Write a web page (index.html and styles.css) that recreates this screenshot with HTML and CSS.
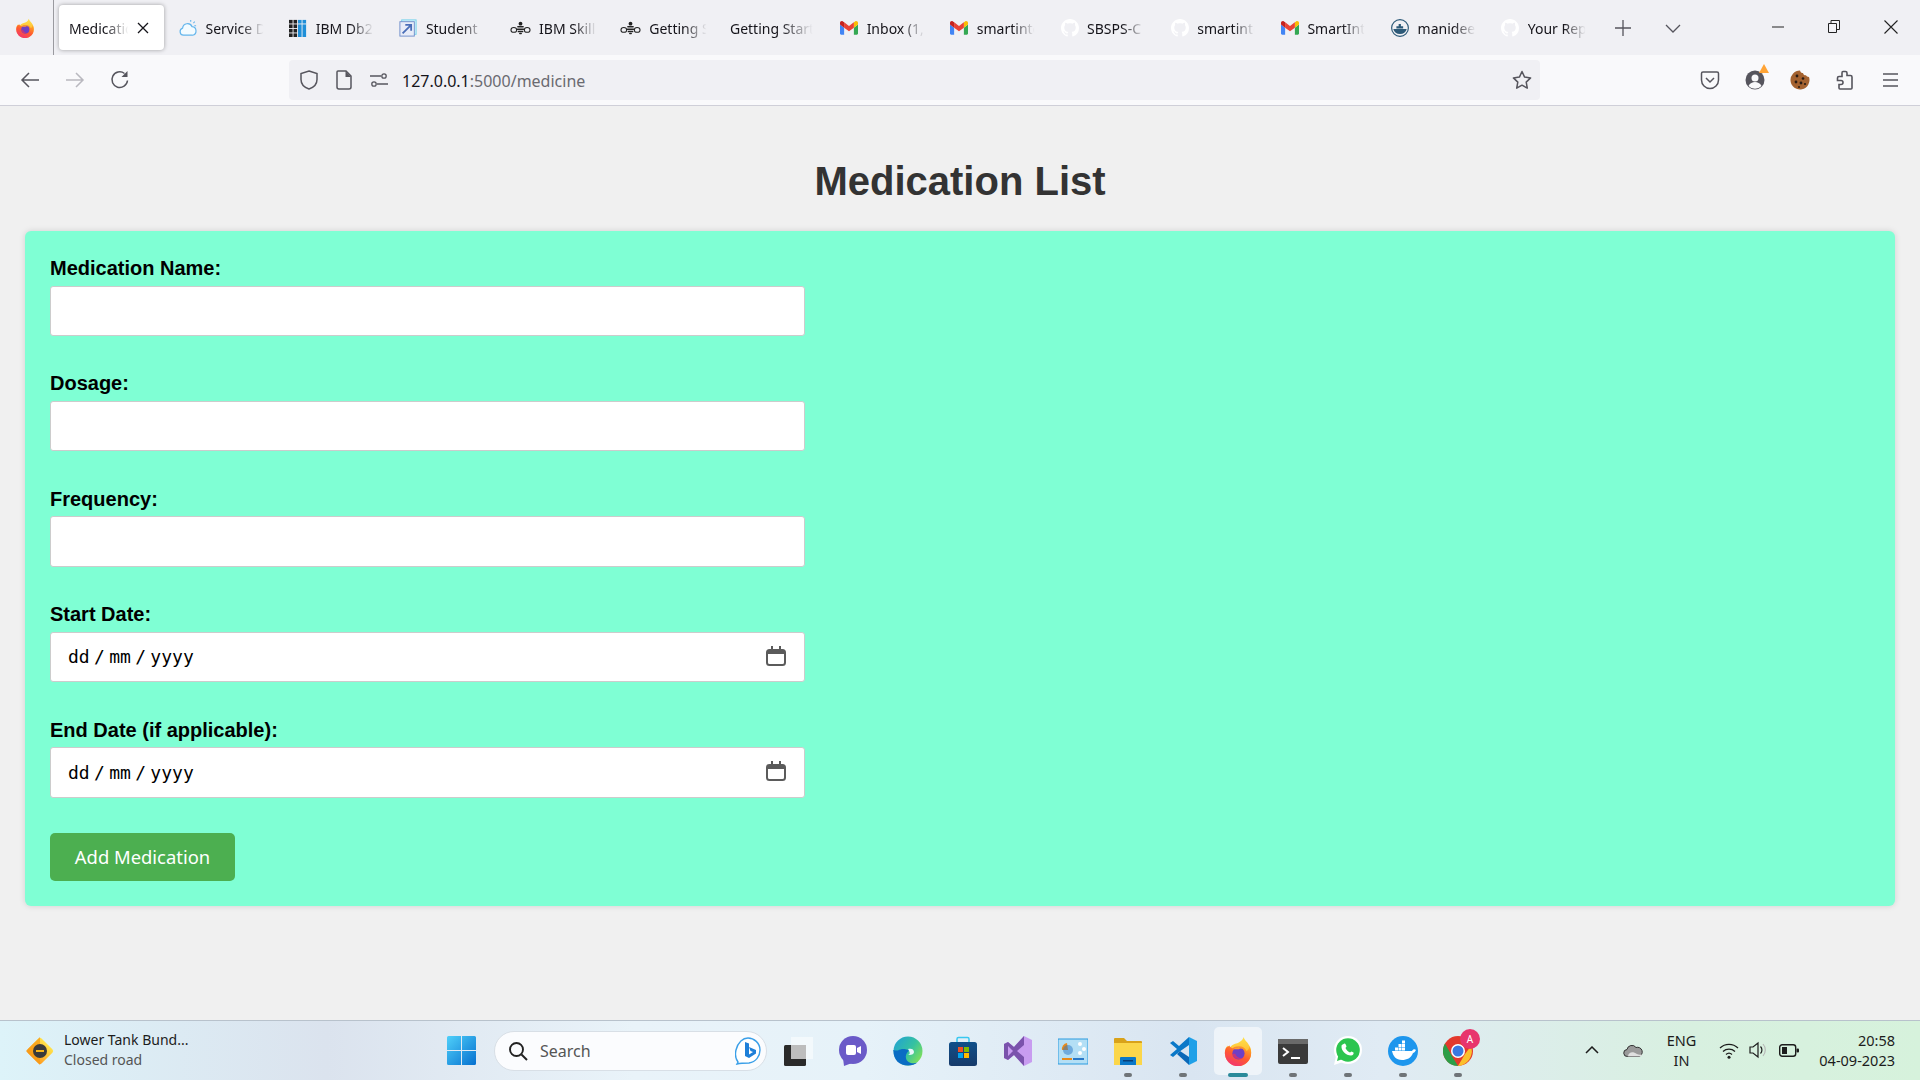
FILE: index.html
```html
<!DOCTYPE html>
<html lang="en">
<head>
<meta charset="utf-8">
<title>Medication List</title>
<link rel="stylesheet" href="styles.css">
</head>
<body>
<svg class="defs" width="0" height="0" aria-hidden="true">
  <defs>
    <linearGradient id="ffBody" x1="0.8" y1="0" x2="0.2" y2="1"><stop offset="0" stop-color="#ffb020"/><stop offset="0.5" stop-color="#ff5a30"/><stop offset="1" stop-color="#f0307a"/></linearGradient>
    <linearGradient id="ffFlame" x1="0.5" y1="0" x2="0.5" y2="1"><stop offset="0" stop-color="#ffe24a"/><stop offset="1" stop-color="#ff9a20"/></linearGradient>
    <linearGradient id="winLogo" x1="0" y1="0" x2="1" y2="1"><stop offset="0" stop-color="#4fd0fa"/><stop offset="1" stop-color="#0670cf"/></linearGradient>
    <linearGradient id="edgeA" x1="0" y1="0" x2="1" y2="0.7"><stop offset="0" stop-color="#1f9fd8"/><stop offset="0.6" stop-color="#35c2a0"/><stop offset="1" stop-color="#7fe05a"/></linearGradient>
    <linearGradient id="storeBg" x1="0" y1="0" x2="0" y2="1"><stop offset="0" stop-color="#10508a"/><stop offset="1" stop-color="#173a6a"/></linearGradient>
    <symbol id="firefox" viewBox="0 0 32 32">
      <path d="M22 1c1 4 4 5 6 9 2 3 2 6 2 8a14 14 0 1 1-28 0c0-3 1-6 3-8 0 2 1 3 2 4 1-4 4-5 7-6 3-1 7-3 8-7z" fill="url(#ffFlame)"/>
      <path d="M3 13a14 14 0 1 0 27 5c0-3-1-5-2-7 0 3-1 4-3 5-1-3-4-5-8-5-3 0-5 1-7 2-2-1-3-2-3-3-2 1-3 2-4 3z" fill="url(#ffBody)"/>
      <circle cx="16.5" cy="18.500" r="6.500" fill="#6f3fc4"/>
      <path d="M11 14c3-3 8-3 11 0-2-1-4-1-5 0-2 0-4 0-6 0z" fill="#ff9a30"/>
      <path d="M10 19c1 5 6 7 11 5-4 0-7-2-8-5z" fill="#e8305f" opacity=".7"/>
    </symbol>
    <symbol id="gmail" viewBox="0 0 24 18">
      <path d="M1.600 18H5.500V8.500L0 4.400v12C0 17.300.7 18 1.600 18z" fill="#4285f4"/>
      <path d="M18.500 18h3.900c.9 0 1.600-.7 1.600-1.600v-12l-5.500 4.100z" fill="#34a853"/>
      <path d="M18.500 1.400v7.100L24 4.400V2.200c0-2-2.300-3.100-3.900-1.900z" fill="#fbbc04"/>
      <path d="M5.500 8.500V1.400L12 6.300l6.500-4.900v7.100L12 13.400z" fill="#ea4335"/>
      <path d="M0 2.200v2.200l5.500 4.100V1.400L3.900.3C2.300-.9 0 .2 0 2.200z" fill="#c5221f"/>
    </symbol>
    <symbol id="github" viewBox="0 0 16 16">
      <path fill="#fff" d="M8 0C3.580 0 0 3.580 0 8c0 3.540 2.290 6.530 5.470 7.590.4.070.55-.17.55-.38 0-.19-.01-.82-.01-1.490-2.010.37-2.530-.49-2.690-.94-.09-.23-.48-.94-.82-1.130-.28-.15-.68-.52-.01-.53.63-.01 1.080.58 1.230.82.720 1.210 1.870.87 2.330.66.070-.52.28-.87.51-1.070-1.780-.2-3.640-.89-3.640-3.950 0-.87.31-1.590.82-2.150-.08-.2-.36-1.020.08-2.120 0 0 .67-.21 2.200.82.64-.18 1.320-.27 2-.27.68 0 1.360.09 2 .27 1.530-1.040 2.200-.82 2.200-.82.44 1.100.16 1.920.08 2.120.51.56.82 1.270.82 2.150 0 3.070-1.870 3.750-3.650 3.950.29.25.54.73.54 1.480 0 1.070-.01 1.930-.01 2.200 0 .21.15.46.55.38A8.013 8.013 0 0 0 16 8c0-4.420-3.580-8-8-8z"/>
    </symbol>
    <symbol id="bee" viewBox="0 0 22 14">
      <g fill="none" stroke="#222" stroke-width="1.100"><ellipse cx="4" cy="9" rx="3" ry="2.500"/><ellipse cx="18" cy="9" rx="3" ry="2.500"/></g>
      <g fill="#222"><circle cx="11" cy="2.500" r="2"/><rect x="7.500" y="5" width="7" height="1.500" rx=".7"/><rect x="7" y="7.500" width="8" height="1.500" rx=".7"/><rect x="8" y="10" width="6" height="1.500" rx=".7"/><rect x="9.500" y="12" width="3" height="1.500" rx=".7"/></g>
    </symbol>
    <symbol id="calendar" viewBox="0 0 20 20">
      <path d="M5 0h2v3h6V0h2v3h1.500A3.500 3.500 0 0 1 20 6.500v10a3.500 3.500 0 0 1-3.500 3.500h-13A3.500 3.500 0 0 1 0 16.500v-10A3.500 3.500 0 0 1 3.500 3H5z M2 8v8.500A1.500 1.500 0 0 0 3.500 18h13a1.500 1.500 0 0 0 1.500-1.500V8z" fill="#5b5b5b" fill-rule="evenodd"/>
    </symbol>
  </defs>
</svg>

<header class="tabbar">
  <div class="ff-slot"><svg class="i20"><use href="#firefox"/></svg></div>
  <div class="tab-sep"></div>
  <div class="tab active"><span class="tab-label">Medicatio</span><svg class="tab-close" viewBox="0 0 12 12"><path d="M1 1l10 10M11 1L1 11" stroke="#15141a" stroke-width="1.300" fill="none"/></svg></div>
  <div class="tabs">
    <div class="tab"><svg class="tab-icon" viewBox="0 0 20 20"><path d="M5 18a4 4 0 0 1-1-7.800A5.500 5.500 0 0 1 14.500 8.500 4.800 4.800 0 0 1 15 18z" fill="#f3fbff" stroke="#63b5ec" stroke-width="1.300"/><path d="M13 1v2M17.500 3l-1.500 1.500M19 7.500h-2" stroke="#63b5ec" stroke-width="1.200"/></svg><span class="tab-label">Service D</span></div>
    <div class="tab"><svg class="tab-icon" viewBox="0 0 20 20"><g fill="#222"><rect x="0" y="1" width="4" height="4"/><rect x="5" y="1" width="4" height="4"/><rect x="0" y="6" width="4" height="4"/><rect x="5" y="6" width="4" height="4"/><rect x="0" y="11" width="4" height="4"/><rect x="5" y="11" width="4" height="4"/><rect x="0" y="16" width="4" height="4"/><rect x="5" y="16" width="4" height="4"/></g><g fill="#1f8fd8"><rect x="10" y="1" width="4" height="19"/><rect x="15" y="1" width="4" height="19"/></g><rect x="10" y="5" width="9" height="1" fill="#f0f0f4"/></svg><span class="tab-label">IBM Db2</span></div>
    <div class="tab"><svg class="tab-icon" viewBox="0 0 20 20"><rect x="3" y="1" width="16" height="16" fill="#d8f2fb" stroke="#6fd0ea"/><rect x="1" y="3" width="16" height="16" fill="#e8ecf8" stroke="#6a8ac8"/><path d="M4 16L13 7M7 6.500h6.500V13" stroke="#4a6eb8" stroke-width="2" fill="none"/></svg><span class="tab-label">Student</span></div>
    <div class="tab"><svg class="tab-icon bee"><use href="#bee"/></svg><span class="tab-label">IBM Skill</span></div>
    <div class="tab"><svg class="tab-icon bee"><use href="#bee"/></svg><span class="tab-label">Getting S</span></div>
    <div class="tab"><span class="tab-label wide">Getting Start</span></div>
    <div class="tab"><svg class="tab-icon gm"><use href="#gmail"/></svg><span class="tab-label">Inbox (1,</span></div>
    <div class="tab"><svg class="tab-icon gm"><use href="#gmail"/></svg><span class="tab-label">smartinte</span></div>
    <div class="tab"><svg class="tab-icon"><use href="#github"/></svg><span class="tab-label">SBSPS-C</span></div>
    <div class="tab"><svg class="tab-icon"><use href="#github"/></svg><span class="tab-label">smartinte</span></div>
    <div class="tab"><svg class="tab-icon gm"><use href="#gmail"/></svg><span class="tab-label">SmartInt</span></div>
    <div class="tab"><svg class="tab-icon" viewBox="0 0 20 20"><circle cx="10" cy="10" r="9.300" fill="#f0f0f4" stroke="#2d5a78" stroke-width="1.300"/><path d="M2.500 11h15a7.800 7.800 0 0 1-15 0z" fill="#2d5a78"/><path d="M6 10.500V8h2.500V5.500H11V8h2.500v2.500z" fill="#2d5a78"/></svg><span class="tab-label">manidee</span></div>
    <div class="tab"><svg class="tab-icon"><use href="#github"/></svg><span class="tab-label">Your Rep</span></div>
    <div class="tab-new"><svg width="16" height="16" viewBox="0 0 16 16"><path d="M8 0v16M0 8h16" stroke="#55545c" stroke-width="1.300"/></svg></div>
    <div class="tab-list"><svg width="16" height="9" viewBox="0 0 16 9"><path d="M1 1l7 7 7-7" stroke="#55545c" stroke-width="1.300" fill="none"/></svg></div>
  </div>
  <div class="win-controls">
    <svg width="12" height="2" viewBox="0 0 12 2"><path d="M0 1h12" stroke="#222" stroke-width="1"/></svg>
    <svg width="12" height="14" viewBox="0 0 12 14"><path d="M.5 3.500h8v9h-8z M3 3.500V.5h8.500v9H8.500" fill="none" stroke="#222"/></svg>
    <svg width="14" height="14" viewBox="0 0 14 14"><path d="M.5.500l13 13M13.500.500l-13 13" stroke="#222" stroke-width="1.100"/></svg>
  </div>
</header>

<nav class="navbar">
  <div class="nav-buttons">
    <svg class="i20" viewBox="0 0 20 20"><path d="M19 10H2M9 3l-7 7 7 7" fill="none" stroke="#56555d" stroke-width="1.500"/></svg>
    <svg class="i20" viewBox="0 0 20 20"><path d="M1 10h17M11 3l7 7-7 7" fill="none" stroke="#b9b8bf" stroke-width="1.500"/></svg>
    <svg class="i20" viewBox="0 0 20 20"><path d="M17.500 10.500A7.800 7.800 0 1 1 14.500 3.500" fill="none" stroke="#56555d" stroke-width="1.500"/><path d="M17.500 1v6h-6z" fill="#56555d"/></svg>
  </div>
  <div class="urlbar">
    <svg class="i20" viewBox="0 0 20 20"><path d="M10 1l8 2.500v6c0 5-3.500 8-8 9.500-4.500-1.500-8-4.500-8-9.500v-6z" fill="none" stroke="#56555d" stroke-width="1.500"/></svg>
    <svg class="i20" viewBox="0 0 20 20"><path d="M4 1h8l5 5v11a2 2 0 0 1-2 2H5a2 2 0 0 1-2-2V2a1 1 0 0 1 1-1z" fill="none" stroke="#56555d" stroke-width="1.500"/><path d="M11.500 1v6H17z" fill="#56555d"/></svg>
    <svg class="i20" viewBox="0 0 20 20"><circle cx="15" cy="6" r="2.200" fill="none" stroke="#56555d" stroke-width="1.300"/><circle cx="5" cy="14" r="2.200" fill="none" stroke="#56555d" stroke-width="1.300"/><path d="M1 6h11M8 14h11" stroke="#56555d" stroke-width="1.300"/></svg>
    <span class="url"><span class="url-host">127.0.0.1</span>:5000/medicine</span>
    <svg class="i20 url-star" viewBox="0 0 20 20"><path d="M10 1.500l2.600 5.600 6 .8-4.400 4.200 1.100 6L10 15.200 4.700 18.100l1.100-6L1.400 7.900l6-.8z" fill="none" stroke="#56555d" stroke-width="1.500" stroke-linejoin="round"/></svg>
  </div>
  <div class="nav-tools">
    <svg class="i20" viewBox="0 0 20 20"><path d="M3 2h14a1.500 1.500 0 0 1 1.500 1.500V10a8.500 8.500 0 0 1-17 0V3.500A1.500 1.500 0 0 1 3 2z" fill="none" stroke="#56555d" stroke-width="1.500"/><path d="M6 8l4 4 4-4" fill="none" stroke="#56555d" stroke-width="1.500"/></svg>
    <span class="account"><svg class="i20" viewBox="0 0 20 20"><circle cx="10" cy="10" r="9.500" fill="#56555d"/><circle cx="10" cy="8" r="3.500" fill="#f9f9fb"/><path d="M3.500 16c1.500-3 4-4 6.500-4s5 1 6.500 4a9 9 0 0 1-13 0z" fill="#f9f9fb"/></svg><svg class="badge-warn" viewBox="0 0 10 9"><path d="M5 0l5 9H0z" fill="#ffa436"/></svg></span>
    <svg class="i20" viewBox="0 0 20 20"><path d="M10 0.500c.5 2 1.500 2.500 3 2.500.3 1.500 1.500 2.500 3 2.300.6 1.200 1.500 1.700 3 1.700A9.500 9.500 0 1 1 10 .5z" fill="#a4622f"/><g fill="#2a1c14"><circle cx="7" cy="6" r="1.400"/><circle cx="13" cy="8.500" r="1.300"/><circle cx="6" cy="12" r="1.400"/><circle cx="11" cy="13" r="1.400"/><circle cx="15" cy="14" r="1.100"/><circle cx="9" cy="17" r="1"/></g></svg>
    <svg class="i20" viewBox="0 0 20 20"><path d="M8 1.500h2.500c1 0 1.500.5 1.500 1.500v2.500h3.500a1.500 1.500 0 0 1 1.500 1.500v11a1 1 0 0 1-1 1H5a1 1 0 0 1-1-1v-3.500h2a2 2 0 0 0 0-4H2.500V8A1.500 1.500 0 0 1 4 6.500h3V3c0-1 .2-1.500 1-1.500z" fill="none" stroke="#56555d" stroke-width="1.600"/></svg>
    <svg class="i20" viewBox="0 0 20 20"><path d="M3 4h15M3 10h15M3 16h15" stroke="#56555d" stroke-width="1.500"/></svg>
  </div>
</nav>

<main class="page">
  <h1 class="title">Medication List</h1>
  <form class="card">
    <div class="field"><label class="field-label">Medication Name:</label><div class="field-input"></div></div>
    <div class="field"><label class="field-label">Dosage:</label><div class="field-input"></div></div>
    <div class="field"><label class="field-label">Frequency:</label><div class="field-input"></div></div>
    <div class="field"><label class="field-label">Start Date:</label><div class="field-input date"><span>dd / mm / yyyy</span><svg class="cal"><use href="#calendar"/></svg></div></div>
    <div class="field"><label class="field-label">End Date (if applicable):</label><div class="field-input date"><span>dd / mm / yyyy</span><svg class="cal"><use href="#calendar"/></svg></div></div>
    <button class="submit" type="button">Add Medication</button>
  </form>
</main>

<footer class="taskbar">
  <div class="widget">
    <svg class="widget-icon" viewBox="0 0 30 30"><rect x="5" y="5" width="20" height="20" rx="2.500" transform="rotate(45 15 15)" fill="url(#ffFlame)"/><path d="M15 .9L.9 15 15 29.100z" fill="#f59a14" opacity=".7"/><circle cx="15" cy="15" r="7" fill="#3a3a3a"/><rect x="11" y="14" width="8" height="2" fill="#f7b51a"/></svg>
    <div class="widget-text"><div class="w-title">Lower Tank Bund...</div><div class="w-sub">Closed road</div></div>
  </div>
  <div class="start"><svg width="29" height="29" viewBox="0 0 29 29"><g fill="url(#winLogo)"><path d="M0 1.500A1.500 1.500 0 0 1 1.500 0H14v14H0zM15 0h12.500A1.500 1.500 0 0 1 29 1.500V14H15zM0 15h14v14H1.500A1.500 1.500 0 0 1 0 27.500zM15 15h14v12.500a1.500 1.500 0 0 1-1.500 1.500H15z"/></g></svg></div>
  <div class="search">
    <svg width="20" height="20" viewBox="0 0 20 20"><circle cx="8.500" cy="8.500" r="6.500" fill="none" stroke="#222" stroke-width="1.900"/><path d="M13.500 13.500L19 19" stroke="#222" stroke-width="2"/></svg>
    <span class="search-text">Search</span>
    <svg class="bing" width="26" height="30" viewBox="0 0 26 30"><path d="M3 26c-3-4-3-8-2-12C3 6 8 2 13 2c6 0 12 5 12 12 0 6-4 12-11 13-3 0-8 0-12 1z" fill="#fff" stroke="#3a9fe8" stroke-width="1.400"/><path d="M10 6l4 1.500v11l4-2.500-2.500-1-1.500-4 7 3v3.500l-7 4.500-4-2z" fill="#1e7fd8"/></svg>
  </div>
  <div class="apps">
    <div class="app"><svg class="app-icon" viewBox="0 0 30 30"><rect x="8" y="1" width="22" height="22" fill="#fff" opacity=".5"/><rect x="1" y="9" width="22" height="21" rx="1.500" fill="#2a2a2a"/><rect x="8" y="9" width="15" height="14" fill="#bdbdbd"/></svg></div>
    <div class="app"><svg class="app-icon" viewBox="0 0 30 30"><circle cx="15" cy="14" r="14" fill="#6a5ac8"/><path d="M5 22l1 8 8-3z" fill="#6a5ac8"/><rect x="8" y="9" width="10" height="10" rx="2" fill="#fff"/><path d="M19 12l4-2v8l-4-2z" fill="#fff"/></svg></div>
    <div class="app"><svg class="app-icon" viewBox="0 0 30 30"><circle cx="15" cy="15" r="14.500" fill="url(#edgeA)"/><path d="M.5 15c0 9 6 14.500 14.500 14.500 4 0 7-1 9.500-3-5 2-10.500 0-11.500-4-.8-3 .5-6 3-8-3.500-2-8-2-11 0-2 0-4 0-5-.5z" fill="#0a6cc4"/><path d="M15 13c3-1 6 0 6 3 0 2-2.500 3.500-6 3 1.500-.5 2-1.500 1.500-3-.3-1-1-2.500-1.500-3z" fill="#eaf5fb"/></svg></div>
    <div class="app"><svg class="app-icon" viewBox="0 0 30 30"><path d="M9 7V3a1.500 1.500 0 0 1 1.500-1.500h9A1.500 1.500 0 0 1 21 3v4" fill="none" stroke="#38c8f0" stroke-width="1.500"/><rect x="1" y="6" width="28" height="24" rx="2.500" fill="url(#storeBg)"/><rect x="10" y="11" width="5" height="5" fill="#f25022"/><rect x="16" y="11" width="5" height="5" fill="#7fba00"/><rect x="10" y="17" width="5" height="5" fill="#00a4ef"/><rect x="16" y="17" width="5" height="5" fill="#ffb900"/></svg></div>
    <div class="app"><svg class="app-icon" viewBox="0 0 30 30"><path d="M21 0l8 4v22l-8 4-10-11-6 5-4-2V8l4-2 6 5z" fill="#c89cf0"/><path d="M21 0v30L11 19l-6 5-4-2V8l4-2 6 5z" fill="#7a52ac"/><path d="M5 10v10l5-5zM21 9l-7 6 7 6z" fill="#c89cf0"/></svg></div>
    <div class="app"><svg class="app-icon" viewBox="0 0 30 30"><rect x="0" y="3" width="30" height="25" fill="#b4dff5" stroke="#2a9be0"/><path d="M9 7l1 7H4a6 6 0 0 1 5-7z" fill="#e88a1a"/><circle cx="10" cy="14" r="5" fill="#2a78c8" opacity=".5"/><g fill="#fff"><circle cx="22" cy="8" r="2"/><circle cx="26" cy="13" r="2"/><circle cx="22" cy="17" r="2"/></g><rect x="4" y="22" width="10" height="2" fill="#e88a1a"/><rect x="15" y="22" width="11" height="2" fill="#2a78c8"/></svg></div>
    <div class="app"><svg class="app-icon" viewBox="0 0 30 30"><path d="M1 3a1 1 0 0 1 1-1h9l3 3h14a1 1 0 0 1 1 1v3H1z" fill="#d9a21a"/><rect x="1" y="7" width="28" height="22" fill="#fbd64a"/><path d="M8 21h14a1 1 0 0 1 1 1v7H7v-7a1 1 0 0 1 1-1z" fill="#0a78c8"/><rect x="10" y="24" width="10" height="1.500" fill="#063e78"/></svg><span class="dot"></span></div>
    <div class="app"><svg class="app-icon" viewBox="0 0 30 30"><path d="M21 1l8 4v20l-8 4z" fill="#1fa0e8"/><path d="M21 1v8l-10 7-6 5-3-2 7-6-7-6 3-2 6 5z" fill="#0a78c8"/><path d="M21 21v8l-12-11 3-3z" fill="#0a68b8"/></svg><span class="dot"></span></div>
    <div class="app current"><svg class="app-icon" viewBox="0 0 30 30"><use href="#firefox"/></svg><span class="dot live"></span></div>
    <div class="app"><svg class="app-icon" viewBox="0 0 30 30"><rect x="0" y="3" width="30" height="25" rx="2" fill="#3a3a3a"/><rect x="0" y="3" width="30" height="5" fill="#6a6a6a"/><path d="M5 12l5 4-5 4" fill="none" stroke="#fff" stroke-width="2"/><path d="M13 22h9" stroke="#fff" stroke-width="2"/></svg><span class="dot"></span></div>
    <div class="app"><svg class="app-icon" viewBox="0 0 30 30"><circle cx="15" cy="14" r="14" fill="#fff"/><path d="M3 20l-2 9 9-3z" fill="#fff"/><circle cx="15" cy="14" r="11.800" fill="#2cc54f"/><path d="M5.500 19l-1.500 6 6-2z" fill="#2cc54f"/><path d="M10.500 8c1-1 2-.5 2.500 1l.5 1.500-1 1.500c1 2 2.500 3.500 4.500 4.500l1.500-1 2 1c.5 1.500-.5 3-2.500 3-5 0-10-5-9.500-9.500 0-1 1-1.500 2-2z" fill="#fff"/></svg><span class="dot"></span></div>
    <div class="app"><svg class="app-icon" viewBox="0 0 30 30"><ellipse cx="15" cy="15" rx="15" ry="15" fill="#1d96ed"/><g fill="#fff"><path d="M4 15h20c1-2 3-2 4-1-1 2-2 3-3 3-2 5-6 7-11 7-6 0-9-4-10-9z"/><rect x="7" y="11.500" width="3" height="3"/><rect x="10.500" y="11.500" width="3" height="3"/><rect x="14" y="11.500" width="3" height="3"/><rect x="10.500" y="8" width="3" height="3"/><rect x="14" y="8" width="3" height="3"/><rect x="14" y="4.500" width="3" height="3"/></g></svg><span class="dot"></span></div>
    <div class="app chrome"><svg class="app-icon" viewBox="0 0 30 30"><circle cx="15" cy="15" r="15" fill="#e3392c"/><path d="M15 30A15 15 0 0 1 2 7.500L9 20z" fill="#2c9e47"/><path d="M15 30l7-12 6-8a15 15 0 0 1-13 20z" fill="#fbc02d"/><circle cx="15" cy="15" r="7" fill="#fff"/><circle cx="15" cy="15" r="5.500" fill="#3a78e0"/></svg><span class="avatar">A</span><span class="dot"></span></div>
  </div>
  <div class="tray">
    <svg class="t-chevron" width="14" height="8" viewBox="0 0 14 8"><path d="M1 7l6-6 6 6" fill="none" stroke="#1c1c1c" stroke-width="1.500"/></svg>
    <svg class="t-cloud" width="20" height="14" viewBox="0 0 20 14"><path d="M4.500 13.500a3.500 3.500 0 0 1-.5-7A5 5 0 0 1 13 4.500a4.500 4.500 0 0 1 3 9z" fill="#9a9a9a" stroke="#333" stroke-width="1"/><path d="M5 13.500c0-3 3-5 6-4s4 3 8 2c0 1-1 2-3 2z" fill="#e0e0e0"/></svg>
    <div class="t-lang"><div>ENG</div><div>IN</div></div>
    <svg class="t-wifi" width="20" height="17" viewBox="0 0 20 17"><g fill="none" stroke="#1c1c1c" stroke-width="1.300"><path d="M1 6a13 13 0 0 1 18 0"/><path d="M4 9.500a9 9 0 0 1 12 0"/><path d="M7 12.500a4.500 4.500 0 0 1 6 0"/></g><circle cx="10" cy="15.200" r="1.500" fill="#1c1c1c"/></svg>
    <svg class="t-vol" width="18" height="18" viewBox="0 0 18 18"><path d="M1 6h3l5-4v14l-5-4H1z" fill="none" stroke="#1c1c1c" stroke-width="1.200"/><path d="M11.500 5.500a5 5 0 0 1 0 7" fill="none" stroke="#1c1c1c" stroke-width="1.200"/><path d="M14 3a9 9 0 0 1 0 12" fill="none" stroke="#b5b5b5" stroke-width="1.100"/></svg>
    <svg class="t-batt" width="20" height="13" viewBox="0 0 20 13"><rect x=".7" y=".7" width="16" height="11.600" rx="2.500" fill="none" stroke="#1c1c1c" stroke-width="1.400"/><rect x="3" y="3" width="5" height="7" fill="#1c1c1c"/><rect x="17.500" y="4.500" width="2.500" height="4" rx="1" fill="#1c1c1c"/></svg>
    <div class="t-clock"><div>20:58</div><div>04-09-2023</div></div>
  </div>
</footer>
</body>
</html>
```
FILE: styles.css
```css
* { box-sizing: border-box; }
html, body { margin: 0; height: 100%; }
body {
  width: 1920px;
  height: 1080px;
  overflow: hidden;
  display: flex;
  flex-direction: column;
  background: #f0f0f0;
  font-family: "Liberation Sans", Arial, sans-serif;
}
.defs { position: absolute; }
.i20 { width: 20px; height: 20px; flex: none; display: block; }

/* Tab strip */
.tabbar {
  height: 55px;
  flex: none;
  display: flex;
  align-items: flex-start;
  background: #f0f0f4;
  font-family: "Noto Sans", sans-serif;
  font-size: 14px;
  color: #15141a;
}
.ff-slot { width: 53px; height: 55px; padding: 18px 0 0 15px; }
.tab-sep { width: 1px; height: 55px; background: #9a9a9f; }
.tabs { display: flex; align-items: flex-start; margin-left: 5px; }
.tab {
  width: 110.2px;
  height: 45px;
  margin-top: 5px;
  padding: 1px 0 0 10px;
  display: flex;
  align-items: center;
  gap: 8.5px;
  white-space: nowrap;
  overflow: hidden;
}
.tab.active {
  width: 105px;
  margin-left: 5px;
  padding: 1px 0 0 10px;
  gap: 0;
  background: #fff;
  border-radius: 4px;
  box-shadow: 0 0 4px rgba(0, 0, 0, .35);
}
.tab-icon { width: 18px; height: 20px; flex: none; }
.tab-icon.bee { width: 21px; height: 14px; }
.tab-icon.gm { width: 18px; height: 14px; }
.tab-label {
  flex: none;
  width: 64px;
  overflow: hidden;
  -webkit-mask-image: linear-gradient(to right, #000 55%, transparent 90%);
  mask-image: linear-gradient(to right, #000 55%, transparent 90%);
}
.tab-label.wide { width: 92px; }
.tab.active .tab-label { width: 66px; }
.tab-close { width: 12px; height: 12px; margin: -1px 0 0 2px; flex: none; }
.tab-new { width: 16px; height: 16px; margin: 20px 0 0 14px; flex: none; }
.tab-list { width: 16px; height: 9px; margin: 18px 0 0 34px; flex: none; }
.win-controls {
  margin-left: auto;
  width: 126px;
  margin-right: 22px;
  height: 55px;
  padding-top: 20px;
  display: flex;
  justify-content: space-between;
  align-items: flex-start;
}
.win-controls svg { margin-top: 0; display: block; }
.win-controls svg:first-child { margin-top: 6px; }

/* Navigation bar */
.navbar {
  height: 51px;
  flex: none;
  display: flex;
  align-items: flex-start;
  background: #f9f9fb;
  border-bottom: 1px solid #cfcfd8;
  padding-top: 5px;
}
.nav-buttons {
  width: 289px;
  height: 40px;
  padding-left: 20px;
  display: flex;
  align-items: center;
  gap: 25px;
}
.urlbar {
  width: 1251px;
  height: 40px;
  padding: 0 8px 0 10px;
  display: flex;
  align-items: center;
  gap: 15px;
  background: #f0f0f4;
  border-radius: 4px;
}
.url {
  margin-left: -2px;
  padding-top: 2px;
  font-family: "Noto Sans", sans-serif;
  font-size: 16px;
  color: #6a6a70;
}
.url-host { color: #15141a; }
.url-star { margin-left: auto; }
.nav-tools {
  height: 40px;
  margin-left: 160px;
  display: flex;
  align-items: center;
  gap: 25px;
}
.account { position: relative; display: block; }
.badge-warn { position: absolute; right: -4px; top: -6px; width: 10px; height: 9px; }

/* Page */
.page { flex: 1; padding: 0 25px; min-height: 0; }
.title {
  margin: 52px 0 27px;
  text-align: center;
  font-size: 40px;
  line-height: 46px;
  font-weight: 700;
  color: #333;
}
.card {
  background: #7fffd4;
  border-radius: 6px;
  padding: 25px;
  height: 675px;
  box-shadow: 0 0 6px rgba(0, 0, 0, .13);
}
.field { margin-bottom: 35.4px; }
.field-label {
  display: block;
  font-size: 20px;
  line-height: 24px;
  font-weight: 700;
  color: #000;
  margin-bottom: 5.5px;
}
.field-input {
  width: 755px;
  height: 50.5px;
  background: #fff;
  border: 1.25px solid #ccc;
  border-radius: 3px;
}
.field-input.date {
  display: flex;
  align-items: center;
  justify-content: space-between;
  padding: 0 18px 0 17px;
  font-family: "DejaVu Sans Mono", monospace;
  font-size: 18px;
  word-spacing: -6.5px;
  color: #000;
}
.cal { width: 20px; height: 20px; display: block; margin-bottom: 2px; }
.submit {
  display: block;
  width: 185px;
  height: 48.5px;
  border: 0;
  border-radius: 5px;
  background: #4caf50;
  color: #fff;
  font-family: "Noto Sans", sans-serif;
  font-size: 18.4px;
  padding: 0 0 2px;
}

/* Taskbar */
.taskbar {
  height: 60px;
  flex: none;
  display: flex;
  align-items: center;
  border-top: 1px solid #b8c2cc;
  background: linear-gradient(90deg, #ddf3f9 0%, #dbe3ee 17%, #e9f3f9 33%, #e6f2f9 45%, #d9e5f1 62%, #e0ebf4 72%, #d8f0e0 88%, #d6f2dc 100%);
  font-family: "Noto Sans", sans-serif;
  color: #1c1c1c;
  position: relative;
}
.widget { width: 447px; padding-left: 25px; display: flex; align-items: center; gap: 9px; }
.widget-icon { width: 30px; height: 30px; flex: none; }
.widget-text { font-size: 14px; line-height: 20px; padding-bottom: 2px; }
.w-sub { color: #555; }
.start { width: 47px; height: 29px; }
.start svg { display: block; }
.search {
  width: 273px;
  height: 40px;
  display: flex;
  align-items: center;
  padding: 0 5px 0 13px;
  gap: 12px;
  background: #fbfcfe;
  border: 1px solid #d8dfe6;
  border-radius: 20px;
  flex: none;
}
.search-text { font-size: 16px; color: #555; }
.bing { margin-left: auto; }
.apps { display: flex; height: 60px; align-items: stretch; flex: none; margin-left: 3px; }
.app {
  width: 55px;
  position: relative;
  display: flex;
  align-items: center;
  justify-content: center;
}
.app-icon { width: 30px; height: 30px; display: block; }
.app.current::before {
  content: "";
  position: absolute;
  left: 3.5px;
  right: 3.5px;
  top: 6px;
  bottom: 6px;
  background: rgba(255, 255, 255, .55);
  border-radius: 5px;
}
.app.current .app-icon { position: relative; }
.dot {
  position: absolute;
  left: 50%;
  bottom: 4px;
  width: 8px;
  height: 4px;
  margin-left: -4px;
  background: #6f7478;
  border-radius: 2px;
}
.dot.live { width: 20px; margin-left: -10px; background: #2a8a9a; }
.avatar {
  position: absolute;
  left: 30px;
  top: 8px;
  width: 20px;
  height: 20px;
  border-radius: 50%;
  background: #e8356d;
  color: #fff;
  font-size: 10px;
  line-height: 20px;
  text-align: center;
}
.tray {
  flex: 1;
  height: 60px;
  padding-right: 25px;
  padding-bottom: 1px;
  display: flex;
  align-items: center;
  font-size: 14.5px;
  line-height: 20px;
}
.t-chevron { margin-left: 100px; }
.t-cloud { margin-left: 23.5px; }
.t-lang { margin-left: 24px; text-align: center; width: 30px; }
.t-wifi { margin-left: 22px; }
.t-vol { margin-left: 10px; }
.t-batt { margin-left: 12px; }
.t-clock { margin-left: auto; text-align: right; }
```
